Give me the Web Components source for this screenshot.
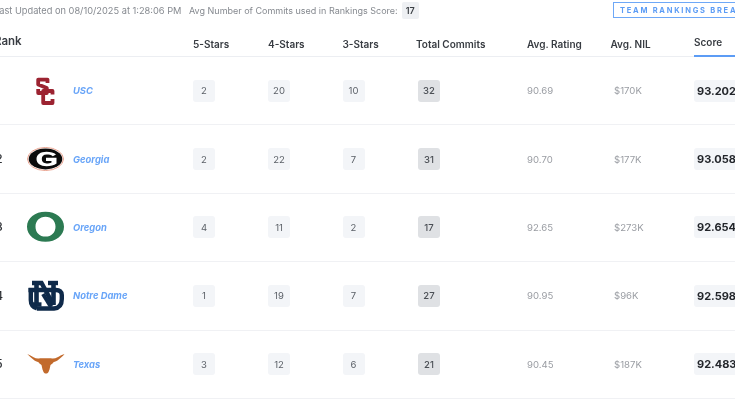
<!DOCTYPE html>
<html>
<head>
<meta charset="utf-8">
<title>Team Rankings</title>
<style>
  html, body { margin: 0; height: 400px; overflow: hidden; background: #fff; }
  body { font-family: Inter, "Liberation Sans", sans-serif; }
</style>
</head>
<body>
<rankings-page>
  <rankings-toolbar updated="Last Updated on 08/10/2025 at 1:28:06 PM" avg="17"></rankings-toolbar>
  <rankings-header></rankings-header>
  <rank-row rank="1" name="USC" logo="usc" five="2" four="20" three="10" total="32" rating="90.69" nil="$170K" score="93.202"></rank-row>
  <rank-row rank="2" name="Georgia" logo="georgia" five="2" four="22" three="7" total="31" rating="90.70" nil="$177K" score="93.058"></rank-row>
  <rank-row rank="3" name="Oregon" logo="oregon" five="4" four="11" three="2" total="17" rating="92.65" nil="$273K" score="92.654"></rank-row>
  <rank-row rank="4" name="Notre Dame" logo="nd" five="1" four="19" three="7" total="27" rating="90.95" nil="$96K" score="92.598"></rank-row>
  <rank-row rank="5" name="Texas" logo="texas" five="3" four="12" three="6" total="21" rating="90.45" nil="$187K" score="92.483"></rank-row>
</rankings-page>
<script>
const COLUMNS = '33px 46px 120px 75px 74.5px 73.5px 111px 83.5px 83.5px 100px';

class RankingsPage extends HTMLElement {
  constructor() {
    super();
    this.attachShadow({ mode: 'open' });
    this.shadowRoot.innerHTML = `
      <style>
        :host {
          display: block;
          width: 800px;
          margin-left: -6px;
          color: #23262b;
          filter: blur(0.6px);
        }
      </style>
      <slot></slot>
    `;
  }
}
customElements.define('rankings-page', RankingsPage);

class RankingsToolbar extends HTMLElement {
  constructor() {
    super();
    this.attachShadow({ mode: 'open' });
    this.shadowRoot.innerHTML = `
      <style>
        :host {
          display: flex;
          align-items: center;
          height: 20px;
          font-size: 9px;
          color: #85898f;
          white-space: nowrap;
        }
        .updated { width: 195px; font-size: 9.25px; }
        .avg { display: flex; align-items: center; gap: 4px; width: 424px; }
        .count {
          display: inline-flex;
          align-items: center;
          justify-content: center;
          width: 17px;
          height: 17px;
          border-radius: 2px;
          background: #eef0f3;
          color: #3b3f45;
          font-weight: 600;
          font-size: 9px;
        }
        .breakdown {
          box-sizing: border-box;
          display: flex;
          align-items: center;
          width: 180px;
          height: 16px;
          padding-left: 6px;
          border: 1px solid #6ea8f7;
          color: #5c9cf5;
          font-size: 7.5px;
          font-weight: 700;
          letter-spacing: 1.75px;
        }
      </style>
      <span class="updated"></span>
      <span class="avg">Avg Number of Commits used in Rankings Score: <span class="count"></span></span>
      <span class="breakdown">TEAM RANKINGS BREAKDOWN</span>
    `;
  }
  connectedCallback() {
    this.shadowRoot.querySelector('.updated').textContent = this.getAttribute('updated');
    this.shadowRoot.querySelector('.count').textContent = this.getAttribute('avg');
  }
}
customElements.define('rankings-toolbar', RankingsToolbar);

class RankingsHeader extends HTMLElement {
  constructor() {
    super();
    this.attachShadow({ mode: 'open' });
    this.shadowRoot.innerHTML = `
      <style>
        :host {
          display: grid;
          grid-template-columns: ${COLUMNS};
          height: 37px;
          box-sizing: border-box;
          border-bottom: 1px solid #eceef2;
          font-size: 10px;
          font-weight: 600;
          color: #383c42;
          white-space: nowrap;
        }
        span { padding-top: 18px; line-height: 12px; }
        .rank { grid-column: 1 / 4; padding-top: 15px; font-size: 11.5px; }
        .score { padding-top: 16px; margin-bottom: -1px; border-bottom: 2px solid #5c9cf5; }
      </style>
      <span class="rank">Rank</span>
      <span>5-Stars</span>
      <span>4-Stars</span>
      <span>3-Stars</span>
      <span>Total Commits</span>
      <span>Avg. Rating</span>
      <span>Avg. NIL</span>
      <span class="score">Score</span>
    `;
  }
}
customElements.define('rankings-header', RankingsHeader);

const LOGOS = {
  usc: `<svg width="38" height="32" viewBox="0 0 38 32">
    <g fill="none" stroke="#9c2331" stroke-width="3.8" stroke-linejoin="round">
      <path d="M20.5 8V4.6H11.2V9.5L19.8 13V18H11.2V14"/>
      <path d="M25.5 19.5V16H16.2V28H25.5V24"/>
    </g>
  </svg>`,
  georgia: `<svg width="38" height="32" viewBox="0 0 38 32">
    <ellipse cx="18.5" cy="16" rx="18" ry="11.5" fill="#fff" stroke="#e9a08c" stroke-width="1"/>
    <ellipse cx="18.5" cy="16" rx="16.8" ry="10.4" fill="#0b0b0b"/>
    <path d="M29 11.5C27 9.6 23.5 8.8 19.5 8.8C13.5 8.8 9.5 11.6 9.5 16S13.5 23.2 19.5 23.2C23.5 23.2 27 22.4 29.5 20.5V14.8H19V18H24.5V19.4C23 20.2 21.5 20.4 19.7 20.4C16.4 20.4 14.8 18.6 14.8 16S16.4 11.6 19.7 11.6C22 11.6 24 12 25.8 13.2Z" fill="#fff"/>
  </svg>`,
  oregon: `<svg width="38" height="32" viewBox="0 0 38 32">
    <path fill-rule="evenodd" fill="#2c7a52" d="M18.5 .7C29 .7 37 7 37 15.7S29 30.7 18.5 30.7 0 24.4 0 15.7 8 .7 18.5 .7ZM18.5 5.8C12.5 5.8 8.5 10 8.5 15.7S12.5 25.6 18.5 25.6 28.5 21.4 28.5 15.7 24.5 5.8 18.5 5.8Z"/>
  </svg>`,
  nd: `<svg width="38" height="32" viewBox="0 0 38 32">
    <g fill="none" stroke="#0f2a4a" stroke-width="4.4">
      <path d="M5 3H14.5L26.5 25"/>
      <path d="M21 3H31"/>
      <path d="M26.5 3V25" stroke-width="4.6"/>
      <path d="M9.5 3V24" stroke-width="4.6"/>
      <path d="M5 24.5H14.5"/>
      <path d="M10 28.5H27C32.5 28 34.8 25 34.8 19V15C34.8 11.5 32.5 10 29 10H1.5"/>
      <path d="M3.8 8V20C3.8 24 5 27 10 28.5"/>
    </g>
    <path d="M16 14L24 27" stroke="#0f2a4a" stroke-width="4"/>
  </svg>`,
  texas: `<svg width="38" height="32" viewBox="0 0 38 32">
    <path fill="#c26a2c" d="M.3 6C2.5 7 4.5 8 6.5 9.3C8.5 10.5 11 10.8 13 10.3H24C26 10.8 28.5 10.5 30.5 9.3C32.5 8 34.5 7 37.5 6C36 8 34 9.5 32 11.3C30 13 28 14 26.5 14.2L25.5 15.5 23.5 17 22.5 21.5 21.5 24C20.8 25.3 20 25.5 19 25.5S17.2 25.3 16.5 24L15.5 21.5 14.5 17 12.5 15.5 11.5 14.2C10 14 8 13 6 11.3C4 9.5 2 8 .3 6Z"/>
  </svg>`
};

class TeamLogo extends HTMLElement {
  constructor() {
    super();
    this.attachShadow({ mode: 'open' });
  }
  connectedCallback() {
    this.shadowRoot.innerHTML = `
      <style>
        :host { display: flex; align-items: center; justify-content: flex-start; }
        svg { display: block; }
      </style>
      ${LOGOS[this.getAttribute('kind')]}
    `;
  }
}
customElements.define('team-logo', TeamLogo);

class StatBox extends HTMLElement {
  constructor() {
    super();
    this.attachShadow({ mode: 'open' });
    this.shadowRoot.innerHTML = `
      <style>
        :host {
          display: flex;
          align-items: center;
          justify-content: center;
          width: 22px;
          height: 22px;
          border-radius: 3px;
          background: #f3f5f8;
          color: #5b6067;
          font-size: 9.5px;
        }
        :host([strong]) { background: #dfe1e4; color: #4b4f55; font-weight: 500; }
      </style>
      <slot></slot>
    `;
  }
}
customElements.define('stat-box', StatBox);

class RankRow extends HTMLElement {
  constructor() {
    super();
    this.attachShadow({ mode: 'open' });
  }
  connectedCallback() {
    const a = (n) => this.getAttribute(n);
    this.shadowRoot.innerHTML = `
      <style>
        :host {
          display: grid;
          grid-template-columns: ${COLUMNS};
          align-items: center;
          height: 68.4px;
          box-sizing: border-box;
          border-bottom: 1px solid #f0f1f4;
          font-size: 9.6px;
          color: #9a9da3;
        }
        .rank { padding-left: 1.5px; font-size: 11.5px; font-weight: 500; color: #2b2e33; }
        .name { font-size: 9.4px; font-weight: 700; font-style: italic; color: #69a5f8; }
        .shift { margin-left: 2px; }
        .nil { margin-left: 3.5px; }
        .score {
          box-sizing: border-box;
          width: 60px;
          height: 22px;
          display: flex;
          align-items: center;
          padding-left: 3px;
          border-radius: 3px;
          background: #f3f5f8;
          color: #23262b;
          font-size: 11px;
          font-weight: 700;
        }
      </style>
      <span class="rank">${a('rank')}</span>
      <team-logo kind="${a('logo')}"></team-logo>
      <span class="name">${a('name')}</span>
      <span><stat-box>${a('five')}</stat-box></span>
      <span><stat-box>${a('four')}</stat-box></span>
      <span><stat-box>${a('three')}</stat-box></span>
      <span class="shift"><stat-box strong>${a('total')}</stat-box></span>
      <span>${a('rating')}</span>
      <span class="nil">${a('nil')}</span>
      <span class="score">${a('score')}</span>
    `;
  }
}
customElements.define('rank-row', RankRow);
</script>
</body>
</html>
